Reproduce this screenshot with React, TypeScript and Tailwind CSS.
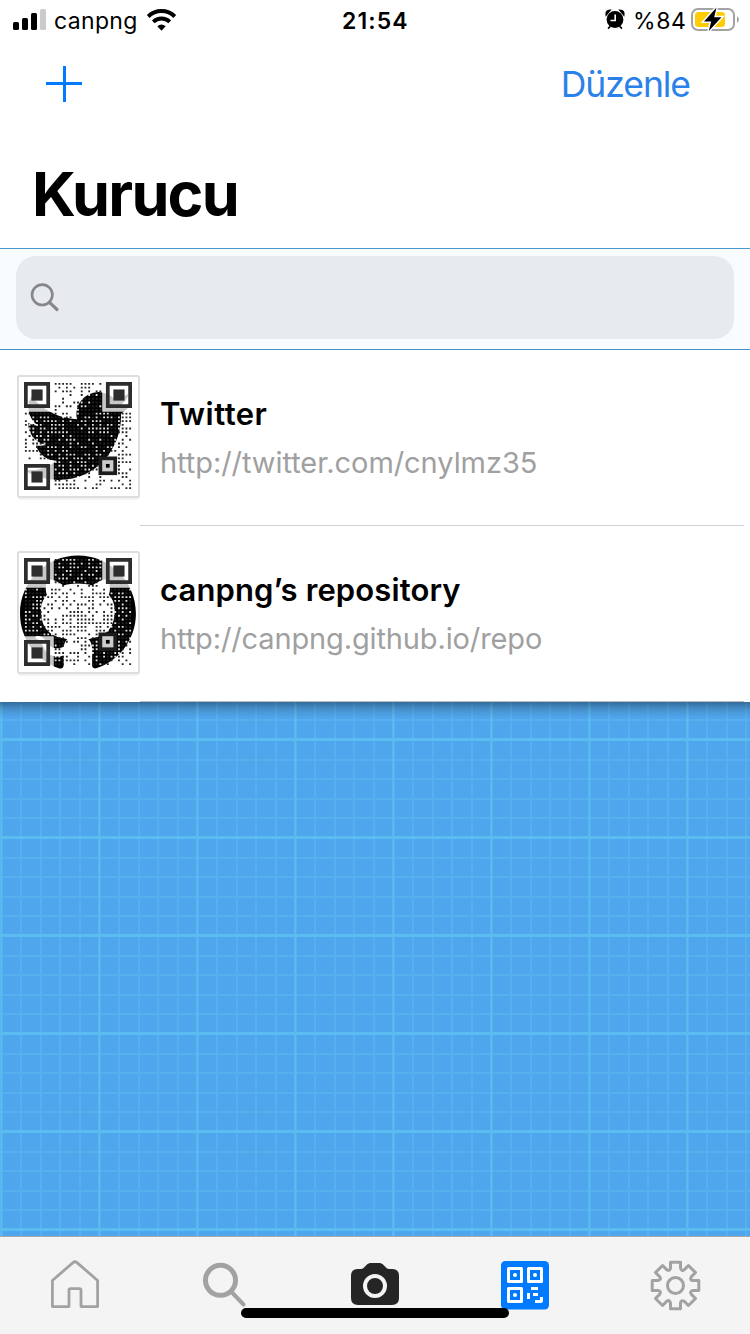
import React from "react";

const MODULES = 29;
const BIRD =
  "M23.953 4.57a10 10 0 01-2.825.775 4.958 4.958 0 002.163-2.723c-.951.555-2.005.959-3.127 1.184a4.92 4.92 0 00-8.384 4.482C7.69 8.095 4.067 6.13 1.64 3.162a4.822 4.822 0 00-.666 2.475c0 1.71.87 3.213 2.188 4.096a4.904 4.904 0 01-2.228-.616v.06a4.923 4.923 0 003.946 4.827 4.996 4.996 0 01-2.212.085 4.936 4.936 0 004.604 3.417 9.867 9.867 0 01-6.102 2.105c-.39 0-.779-.023-1.17-.067a13.995 13.995 0 007.557 2.209c9.053 0 13.998-7.496 13.998-13.985 0-.21 0-.42-.015-.63A9.935 9.935 0 0024 4.59z";
const OCTOCAT =
  "M12 .297c-6.63 0-12 5.373-12 12 0 5.303 3.438 9.8 8.205 11.385.6.113.82-.258.82-.577 0-.285-.01-1.04-.015-2.04-3.338.724-4.042-1.61-4.042-1.61C4.422 18.07 3.633 17.7 3.633 17.7c-1.087-.744.084-.729.084-.729 1.205.084 1.838 1.236 1.838 1.236 1.07 1.835 2.809 1.305 3.495.998.108-.776.417-1.305.76-1.605-2.665-.3-5.466-1.332-5.466-5.93 0-1.31.465-2.38 1.235-3.22-.135-.303-.54-1.523.105-3.176 0 0 1.005-.322 3.3 1.23.96-.267 1.98-.399 3-.405 1.02.006 2.04.138 3 .405 2.28-1.552 3.285-1.23 3.285-1.23.645 1.653.24 2.873.12 3.176.765.84 1.23 1.91 1.23 3.22 0 4.61-2.805 5.625-5.475 5.92.42.36.81 1.096.81 2.22 0 1.606-.015 2.896-.015 3.286 0 .315.21.69.825.57C20.565 22.092 24 17.592 24 12.297c0-6.627-5.373-12-12-12";

function inFinder(x: number, y: number) {
  const corner = (x < 8 && y < 8) || (x > 20 && y < 8) || (x < 8 && y > 20);
  const align = x >= 20 && x <= 24 && y >= 20 && y <= 24;
  return corner || align;
}

function dots(seed: number) {
  const dark: string[] = [];
  const light: string[] = [];
  let s = seed;
  for (let y = 0; y < MODULES; y++) {
    for (let x = 0; x < MODULES; x++) {
      s = (s * 48271) % 2147483647;
      if (inFinder(x, y)) continue;
      const d = `M${x + 0.25} ${y + 0.25}h.5v.5h-.5z`;
      ((s >> 9) % 100 < 52 ? dark : light).push(d);
    }
  }
  return { dark: dark.join(""), light: light.join("") };
}

function Finder({ x, y }: { x: number; y: number }) {
  return (
    <g transform={`translate(${x} ${y})`} fill="#2d2d2d" fillRule="evenodd">
      <path d="M0 0H7V7H0z M1 1V6H6V1z" />
      <path d="M2 2h3v3h-3z" />
    </g>
  );
}

function ArtCode({ art, transform, seed, top }: { art: string; transform: string; seed: number; top: number }) {
  const { dark, light } = dots(seed);
  return (
    <svg width="123" height="126" viewBox="0 0 123 126" className="block shrink-0">
      <rect x="1" y="4" width="121" height="121" rx="2" fill="#000" opacity=".05" />
      <rect x="1" y="1" width="121" height="121" rx="1.5" fill="#fff" stroke="#dedede" strokeWidth="2" />
      <path d={art} transform={transform} />
      <g transform={`translate(7 ${top}) scale(3.724)`}>
        <path d={dark} fill="#222" />
        <path d={light} fill="#fff" fillOpacity=".88" />
        <path d="M0 0H8V8H0zM21 0H29V8H21zM0 21H8V29H0z" fill="#fff" fillOpacity=".78" />
        <Finder x={0} y={0} />
        <Finder x={22} y={0} />
        <Finder x={0} y={22} />
        <path d="M20 20H25V25H20z" fill="#1c1c1c" />
        <path d="M21 21H24V24H21z" fill="#ccc" />
        <path d="M22 22H23V23H22z" />
      </g>
    </svg>
  );
}

function Row({ title, url, titleClass, urlClass, children, last }: {
  title: string; url: string; titleClass: string; urlClass: string; children: React.ReactNode; last?: boolean;
}) {
  return (
    <div className="flex h-[176px] pl-[17px]">
      <div className="w-[123px] shrink-0 pt-[25px]">{children}</div>
      <div className={`mr-[6px] flex-1 border-b pt-[45px] pl-[20px] ${last ? "border-[#bdbdbd]" : "border-[#d0d0d2]"}`}>
        <div className={`h-[38px] text-[31px] leading-[38px] font-semibold whitespace-nowrap text-black ${titleClass}`}>{title}</div>
        <div className={`mt-[11px] h-[38px] text-[29px] leading-[38px] whitespace-nowrap text-[#a0a0a0] ${urlClass}`}>{url}</div>
      </div>
    </div>
  );
}

function lines(start: number, end: number, origin: number) {
  const minor: number[] = [];
  const major: number[] = [];
  for (let k = -5; k < 50; k++) {
    const p = origin + k * 19.6;
    if (p < start - 2 || p > end + 2) continue;
    (k % 5 === 0 ? major : minor).push(p);
  }
  return { minor, major };
}

function Blueprint() {
  const v = lines(0, 750, 1);
  const h = lines(0, 534, 37.5);
  return (
    <svg width="750" height="534" className="block">
      <rect width="750" height="534" fill="#50a6ed" />
      {v.minor.map((x) => <path key={x} d={`M${Math.round(x + 0.4)} 0V534`} stroke="#56b0ee" strokeWidth="2" />)}
      {h.minor.map((y) => <path key={y} d={`M0 ${Math.round(y + 0.4)}H750`} stroke="#56b0ee" strokeWidth="2" />)}
      {v.major.map((x) => <path key={x} d={`M${x + 0.4} 0V534`} stroke="#5abcf0" strokeWidth="2.2" />)}
      {h.major.map((y) => <path key={y} d={`M0 ${y}H750`} stroke="#5abcf0" strokeWidth="3" />)}
    </svg>
  );
}

function Gear() {
  const teeth: string[] = [];
  for (let i = 0; i < 8; i++) {
    const a = (i * Math.PI) / 4;
    const p = (x: number, y: number) =>
      `${(25.5 + x * Math.cos(a) - y * Math.sin(a)).toFixed(2)} ${(25.5 + x * Math.sin(a) + y * Math.cos(a)).toFixed(2)}`;
    teeth.push(`${i ? "L" : "M"}${p(-5, -17.5)}L${p(-5, -23.3)}L${p(5, -23.3)}L${p(5, -17.5)}Q${p(6, -13.6)} ${p(8.84, -15.9)}`);
  }
  return (
    <svg width="50" height="52" viewBox="0 0 50 52" className="overflow-visible" fill="none" stroke="#a2a2a2" strokeWidth="3" strokeLinejoin="round">
      <path d={teeth.join("") + "Z"} />
      <circle cx="25.5" cy="25.5" r="8" />
    </svg>
  );
}

export default function App() {
  return (
    <div className="relative flex h-[1334px] w-[750px] flex-col overflow-hidden bg-white font-['Inter',sans-serif]">
      <header className="flex h-[249px] shrink-0 flex-col border-b border-[#4b98cf] bg-white">
        <div className="flex h-[40px] items-center pl-[12px] text-[23px] leading-[40px] text-black">
          <svg width="36" height="40" className="shrink-0">
            <rect x="1" y="22" width="6" height="8" rx="1.5" />
            <rect x="10" y="18" width="6" height="12" rx="1.5" />
            <rect x="19" y="13" width="6" height="17" rx="1.5" />
            <rect x="28" y="9" width="6" height="21" rx="1.5" fill="#cbcbcb" />
          </svg>
          <span className="ml-[6px] w-[92px] pt-[2px] tracking-[0.35px]">canpng</span>
          <svg width="32" height="40" className="shrink-0" fill="none" stroke="#000">
            <path d="M2.2 16.5A19 19 0 0 1 28.8 16.5" strokeWidth="3.9" />
            <path d="M7.3 21.8A12 12 0 0 1 23.7 21.8" strokeWidth="3.9" />
            <path d="M11.3 26.2Q15.5 22.8 19.7 26.2L15.5 30.8z" fill="#000" stroke="none" />
          </svg>
          <span className="ml-[164px] w-[70px] pt-[2px] font-semibold tracking-[1.1px]">21:54</span>
          <svg width="22" height="40" className="ml-[192px] shrink-0">
            <circle cx="11" cy="19.5" r="8.4" />
            <path d="M2.2 15Q1.500 10.500 6 10.300zM19.800 15Q20.500 10.500 16 10.300zM4 28.600l2.500-2.500M18 28.600l-2.500-2.500" stroke="#000" strokeWidth="1.5" />
            <path d="M11.200 14.500V20.500H6.500" stroke="#fff" strokeWidth="1.6" fill="none" />
          </svg>
          <span className="ml-[7px] w-[56px] pt-[2px] tracking-[0.6px]">%84</span>
          <svg width="50" height="40" className="ml-[2px] shrink-0">
            <rect x="1" y="9" width="42" height="21" rx="6" fill="#fff" stroke="#a3a3a3" strokeWidth="2" />
            <rect x="4" y="12" width="30" height="15" rx="3.5" fill="#ffcc02" />
            <path d="M46 16Q50 19.5 46 23z" fill="#a3a3a3" />
            <path d="M25.5 7.5L13 21.5H20.2L17.8 31L30.5 17.2H23.2z" stroke="#fff" strokeWidth="3" />
            <path d="M25.5 7.5L13 21.5H20.2L17.8 31L30.5 17.2H23.2z" />
          </svg>
        </div>
        <div className="flex h-[88px] items-center justify-between pr-[60px] pl-[46px]">
          <svg width="36" height="36" stroke="#007aff" strokeWidth="3">
            <path d="M18.5 0V36M0 17.5H36" />
          </svg>
          <span className="pt-[1px] text-[35.5px] leading-[44px] tracking-[-1.05px] text-[#2b81ea]">Düzenle</span>
        </div>
        <h1 className="mt-[28px] pl-[32px] text-[61px] leading-[76px] font-bold tracking-[-1.75px] text-black">Kurucu</h1>
      </header>
      <div className="h-[101px] shrink-0 border-b border-[#4790c8] bg-[#f8fcff] px-[16px] pt-[7px]">
        <div className="flex h-[83px] items-center rounded-[20px] bg-[#e7ebef] pl-[14px]">
          <svg width="30" height="30" fill="none" stroke="#85878b">
            <circle cx="12.2" cy="11.8" r="10.2" strokeWidth="2.6" />
            <path d="M19.5 19.3L27 26.5" strokeWidth="3.2" strokeLinecap="round" />
          </svg>
        </div>
      </div>
      <main className="h-[352px] shrink-0 bg-white">
        <Row title="Twitter" url="http://twitter.com/cnylmz35" titleClass="tracking-[0.5px]" urlClass="tracking-[-0.06px]">
          <ArtCode art={BIRD} transform="translate(7 7) scale(4.5)" seed={4217} top={7} />
        </Row>
        <Row title="canpng’s repository" url="http://canpng.github.io/repo" titleClass="tracking-[0.12px]" urlClass="tracking-[-0.13px]" last>
          <ArtCode art={OCTOCAT} transform="translate(3 3) scale(4.83)" seed={90731} top={7} />
        </Row>
      </main>
      <div className="relative h-[534px] shrink-0">
        <Blueprint />
        <div className="absolute inset-x-0 top-0 h-[16px] bg-linear-to-b from-black/35 via-black/12 to-transparent" />
      </div>
      <nav className="grid h-[98px] shrink-0 grid-cols-5 justify-items-center border-t border-[#a7a9ac] bg-[#f4f4f4]">
        <svg width="50" height="50" className="mt-[23px]" fill="none" stroke="#a2a2a2" strokeWidth="2.8" strokeLinejoin="round">
          <path d="M2.4 20.5L23 2.6Q25 .8 27 2.6L47.6 20.5V46.6H31V30Q31 28.7 29.5 28.7H20.5Q19 28.7 19 30V46.6H2.4z" />
        </svg>
        <svg width="50" height="50" className="mt-[23px]" fill="none" stroke="#a2a2a2">
          <circle cx="20.5" cy="20.3" r="15" strokeWidth="5" />
          <path d="M32 32.500L43.500 44.500" strokeWidth="4" strokeLinecap="round" />
        </svg>
        <svg width="50" height="50" className="mt-[23px]">
          <path d="M8 9H11Q13 9 15 6.5Q17.500 3 20 3H30Q32.500 3 35 6.500Q37 9 39 9H42Q49 9 49 16V38Q49 45 42 45H8Q1 45 1 38V16Q1 9 8 9z" fill="#252525" />
          <circle cx="25" cy="26" r="10" fill="none" stroke="#f4f4f4" strokeWidth="4" />
        </svg>
        <svg width="50" height="50" className="mt-[23px]">
          <rect x="1" y="1" width="48" height="48.500" rx="4.5" fill="#007aff" />
          <g fill="none" stroke="#fff" strokeWidth="3" strokeLinejoin="round">
            <rect x="8.500" y="8.500" width="13" height="13" />
            <rect x="28.500" y="8.500" width="13" height="13" />
            <rect x="8.500" y="28.500" width="13" height="13" />
            <path d="M31 28.500H38M33 34.500H38M28.500 33V39M35 41.500H40.500Q41.500 41.500 41.500 40.500V37" />
          </g>
          <g fill="#fff"><circle cx="15" cy="15" r="2" /><circle cx="35" cy="15" r="2" /><circle cx="15" cy="35" r="2" /></g>
        </svg>
        <div className="mt-[23px]"><Gear /></div>
      </nav>
      <div className="absolute top-[1308px] left-[241px] h-[10px] w-[268px] rounded-full bg-black" />
    </div>
  );
}
